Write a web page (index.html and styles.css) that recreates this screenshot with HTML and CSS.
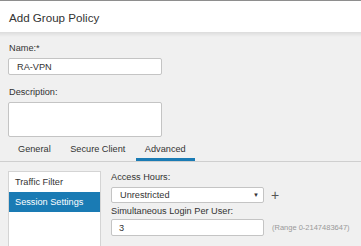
FILE: index.html
```html
<!DOCTYPE html>
<html>
<head>
<meta charset="utf-8">
<link rel="stylesheet" href="styles.css">
</head>
<body>
<div class="dialog">
  <div class="header"><h1 class="title">Add Group Policy</h1></div>
  <div class="shade"></div>
  <div class="form">
    <div class="field">
      <label class="label">Name:*</label>
      <div class="input name-input">RA-VPN</div>
    </div>
    <div class="field desc-field">
      <label class="label">Description:</label>
      <div class="input textarea"></div>
    </div>
  </div>
  <div class="tabs">
    <div class="tab">General</div>
    <div class="tab">Secure Client</div>
    <div class="tab active">Advanced</div>
  </div>
  <div class="content">
    <div class="nav">
      <div class="nav-item">Traffic Filter</div>
      <div class="nav-item selected">Session Settings</div>
    </div>
    <div class="settings">
      <label class="label">Access Hours:</label>
      <div class="row">
        <div class="input select"><span>Unrestricted</span><span class="caret">▼</span></div>
        <span class="plus">+</span>
      </div>
      <label class="label sim-label">Simultaneous Login Per User:</label>
      <div class="row row-num">
        <div class="input num-input">3</div>
        <span class="range">(Range 0-2147483647)</span>
      </div>
    </div>
  </div>
</div>
</body>
</html>
```
FILE: styles.css
```css
html, body {
  margin: 0;
  padding: 0;
}
body {
  background: #f0f0f0;
  font-family: "Liberation Sans", Arial, sans-serif;
  color: #333;
  width: 361px;
  height: 246px;
  overflow: hidden;
}
.header {
  background: #fff;
  border-top: 1px solid #8e8e8e;
  height: 31px;
  display: flex;
  align-items: center;
  padding-left: 9px;
}
.title {
  margin: 0;
  font-weight: normal;
  font-size: 11.6px;
  color: #333;
  padding-top: 1px;
}
.shade {
  height: 5px;
  background: linear-gradient(#dcdcdc, #f0f0f0);
}
.form {
  padding: 6px 8px 0 8px;
  display: flex;
  flex-direction: column;
}
.field {
  display: flex;
  flex-direction: column;
}
.label {
  display: block;
  font-size: 9.2px;
  line-height: 11px;
  color: #333;
  padding-left: 1px;
}
.form .label {
  margin-bottom: 4px;
}
.input {
  background: #fff;
  border: 1px solid #c4c4c4;
  border-radius: 2px;
  box-sizing: border-box;
  font-size: 9.2px;
  color: #333;
  display: flex;
  align-items: center;
}
.name-input {
  width: 154px;
  height: 17px;
  padding-left: 8px;
}
.desc-field {
  margin-top: 12px;
}
.textarea {
  width: 154px;
  height: 35px;
}
.tabs {
  margin-top: 4px;
  display: flex;
  border-bottom: 1px solid #cfcfcf;
  height: 20px;
  padding-left: 9px;
}
.tab {
  font-size: 9.2px;
  color: #333;
  padding: 2px 9px 0 9px;
  margin-right: 1.5px;
  line-height: 12px;
}
.tab.active {
  border-bottom: 3px solid #1a7bb4;
  padding: 2px 9px 0 9px;
}
.content {
  display: flex;
  padding: 9px 8px 0 8px;
  gap: 10px;
}
.nav {
  width: 93px;
  height: 77px;
  box-sizing: border-box;
  background: #fff;
  border: 1px solid #d4d4d4;
  border-bottom: none;
  padding-top: 1px;
  flex-shrink: 0;
}
.nav-item {
  font-size: 9.2px;
  height: 19px;
  line-height: 19px;
  padding-left: 6px;
  color: #333;
}
.nav-item.selected {
  background: #1a7bb4;
  color: #fff;
  height: 20px;
  line-height: 20px;
}
.settings {
  display: flex;
  flex-direction: column;
  padding-top: 1px;
}
.settings .label {
  padding-left: 0;
}
.row {
  display: flex;
  align-items: center;
  margin-top: 4px;
}
.select {
  width: 153px;
  height: 16px;
  padding-left: 8px;
  padding-right: 4px;
  justify-content: space-between;
}
.caret {
  font-size: 6px;
  color: #333;
}
.plus {
  font-size: 14px;
  line-height: 14px;
  color: #555;
  margin-left: 7px;
}
.sim-label {
  margin-top: 3px;
}
.row-num {
  margin-top: 2px;
}
.num-input {
  width: 153px;
  height: 17px;
  padding-left: 7px;
}
.range {
  font-size: 7.5px;
  color: #999;
  margin-left: 8px;
}
```
